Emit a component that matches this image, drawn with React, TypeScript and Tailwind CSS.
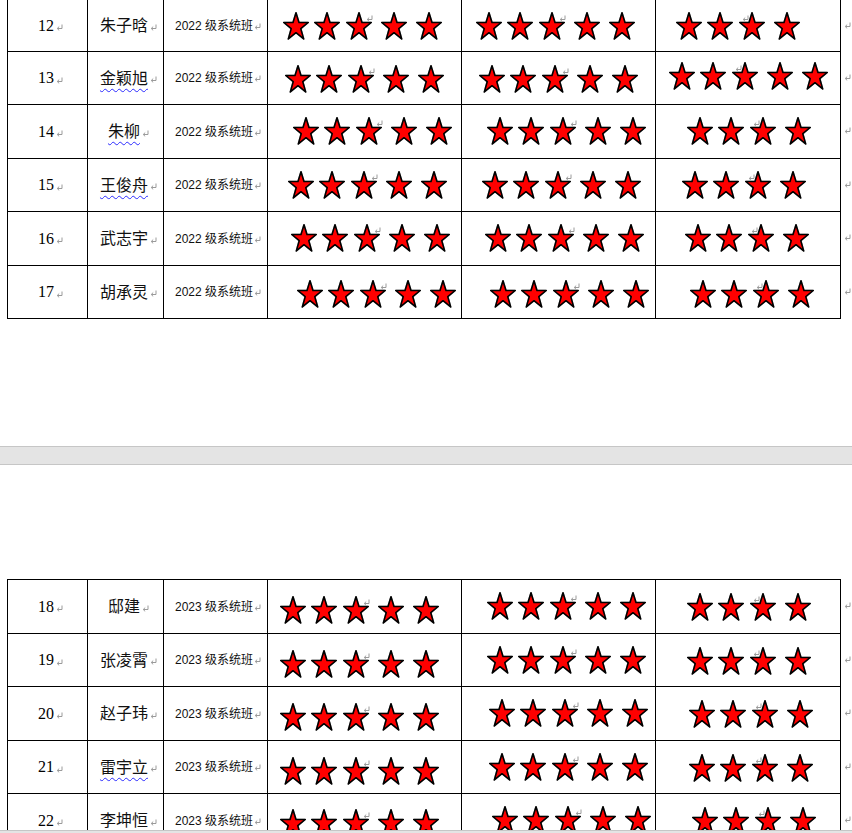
import React from "react";

type Row = {
  n: number;
  name: string;
  cls: string;
  h: number;
  wavy?: boolean;
  // [left, top] offsets of the first star in each of the three star cells
  s: [number, number][];
  c3: number;
};

const table1: Row[] = [
  { n: 12, name: "朱子晗", cls: "2022 级系统班", h: 52, s: [[15, 12], [14, 12], [20, 12]], c3: 4 },
  { n: 13, name: "金颖旭", cls: "2022 级系统班", h: 53, wavy: true, s: [[17, 13], [17, 13], [13, 10]], c3: 5 },
  { n: 14, name: "朱柳", cls: "2022 级系统班", h: 54, wavy: true, s: [[25, 12], [25, 12], [31, 12]], c3: 4 },
  { n: 15, name: "王俊舟", cls: "2022 级系统班", h: 53, wavy: true, s: [[20, 12], [20, 12], [26, 12]], c3: 4 },
  { n: 16, name: "武志宇", cls: "2022 级系统班", h: 54, s: [[23, 12], [23, 12], [29, 12]], c3: 4 },
  { n: 17, name: "胡承灵", cls: "2022 级系统班", h: 53, s: [[29, 14], [28, 14], [34, 14]], c3: 4 },
];

const table2: Row[] = [
  { n: 18, name: "邸建", cls: "2023 级系统班", h: 54, s: [[12, 16], [25, 12], [31, 13]], c3: 4 },
  { n: 19, name: "张凌霄", cls: "2023 级系统班", h: 53, s: [[12, 16], [25, 12], [31, 13]], c3: 4 },
  { n: 20, name: "赵子玮", cls: "2023 级系统班", h: 54, s: [[12, 16], [27, 12], [33, 13]], c3: 4 },
  { n: 21, name: "雷宇立", cls: "2023 级系统班", h: 53, wavy: true, s: [[12, 16], [27, 12], [33, 13]], c3: 4 },
  { n: 22, name: "李坤恒", cls: "2023 级系统班", h: 54, wavy: true, s: [[12, 15], [30, 12], [36, 13]], c3: 4 },
];

// little gray paragraph mark, like Word's hidden formatting glyph
function Mark({ className = "" }: { className?: string }) {
  return (
    <svg width="7" height="7" viewBox="0 0 7 7" className={`inline-block shrink-0 ${className}`}>
      <path d="M6 0.5V4.5H1.5M3.2 2.6L1.2 4.5L3.2 6.4" fill="none" stroke="#9a9a9a" strokeWidth="1" />
    </svg>
  );
}

function Star({ anchor }: { anchor?: "left" | "right" }) {
  return (
    <div className="relative w-[26px] h-[28px] shrink-0">
      <svg
        width="26"
        height="28"
        viewBox="0 0 100 100"
        preserveAspectRatio="none"
        className="drop-shadow-[0.6px_0.6px_0_#b0b0b0]"
      >
        <polygon
          points="50,3 61.5,37.5 97,37.5 68.5,59.5 79.5,96 50,74 20.5,96 31.5,59.5 3,37.5 38.5,37.5"
          fill="#ff0000"
          stroke="#000"
          strokeWidth="1.6"
          strokeLinejoin="round"
          vectorEffect="non-scaling-stroke"
        />
      </svg>
      {anchor === "right" && <Mark className="absolute left-[20px] top-[3px]" />}
      {anchor === "left" && <Mark className="absolute left-[3px] top-[3px]" />}
    </div>
  );
}

function StarCell({ pos, count, anchor }: { pos: [number, number]; count: number; anchor: "left" | "right" }) {
  const gaps = ["", "ml-[5px]", "ml-[6px]", "ml-[9px]", "ml-[9px]"];
  return (
    <div className="border-r border-black flex items-start" style={{ paddingLeft: pos[0], paddingTop: pos[1] }}>
      {Array.from({ length: count }).map((_, i) => (
        <div key={i} className={gaps[i]}>
          <Star anchor={i === 2 ? anchor : undefined} />
        </div>
      ))}
    </div>
  );
}

function TableRow({ r }: { r: Row }) {
  return (
    <div className="flex" style={{ height: r.h }}>
      <div className="grid grid-cols-[80px_76px_104px_194px_194px_185px] border-l border-b border-black h-full">
        <div className="border-r border-black flex items-center justify-center pl-[6px] font-['Liberation_Serif',serif] text-[16px] text-black">
          <span>{r.n}</span>
          <Mark className="ml-[2px] mt-[4px]" />
        </div>
        <div className="border-r border-black flex items-center justify-center pl-[6px] pb-[3px] font-['Noto_Sans_CJK_SC',sans-serif] text-[16px] text-[#111]">
          <span
            className={
              r.wavy
                ? "underline decoration-wavy decoration-[#2b2bff] decoration-1 underline-offset-[4px]"
                : ""
            }
          >
            {r.name}
          </span>
          <Mark className="ml-[2px] mt-[6px]" />
        </div>
        <div className="border-r border-black flex items-center justify-center pl-[5px] font-['Liberation_Sans','Noto_Sans_CJK_SC',sans-serif] text-[12px] text-[#111]">
          <span>{r.cls}</span>
          <Mark className="ml-[1px] mt-[1px]" />
        </div>
        <StarCell pos={r.s[0]} count={5} anchor="right" />
        <StarCell pos={r.s[1]} count={5} anchor="right" />
        <StarCell pos={r.s[2]} count={r.c3} anchor="left" />
      </div>
      <div className="w-[12px] pl-[3px] pt-[12px]">
        <Mark />
      </div>
    </div>
  );
}

export default function App() {
  return (
    <div className="w-[852px] h-[833px] overflow-hidden bg-white flex flex-col">
      {/* page 1 tail */}
      <div className="h-[446px] shrink-0 pl-[7px]">
        {table1.map((r) => (
          <TableRow key={r.n} r={r} />
        ))}
      </div>

      {/* gap between pages */}
      <div className="h-[19px] shrink-0 bg-[#e4e4e4] border-y border-[#c6c6c6]" />

      {/* page 2 head */}
      <div className="h-[365px] shrink-0 overflow-hidden pl-[7px] pt-[114px]">
        <div className="border-t border-black w-[834px]">
          {table2.map((r) => (
            <TableRow key={r.n} r={r} />
          ))}
        </div>
      </div>

      <div className="flex-1 bg-[#e4e4e4] border-t border-[#c6c6c6]" />
    </div>
  );
}
